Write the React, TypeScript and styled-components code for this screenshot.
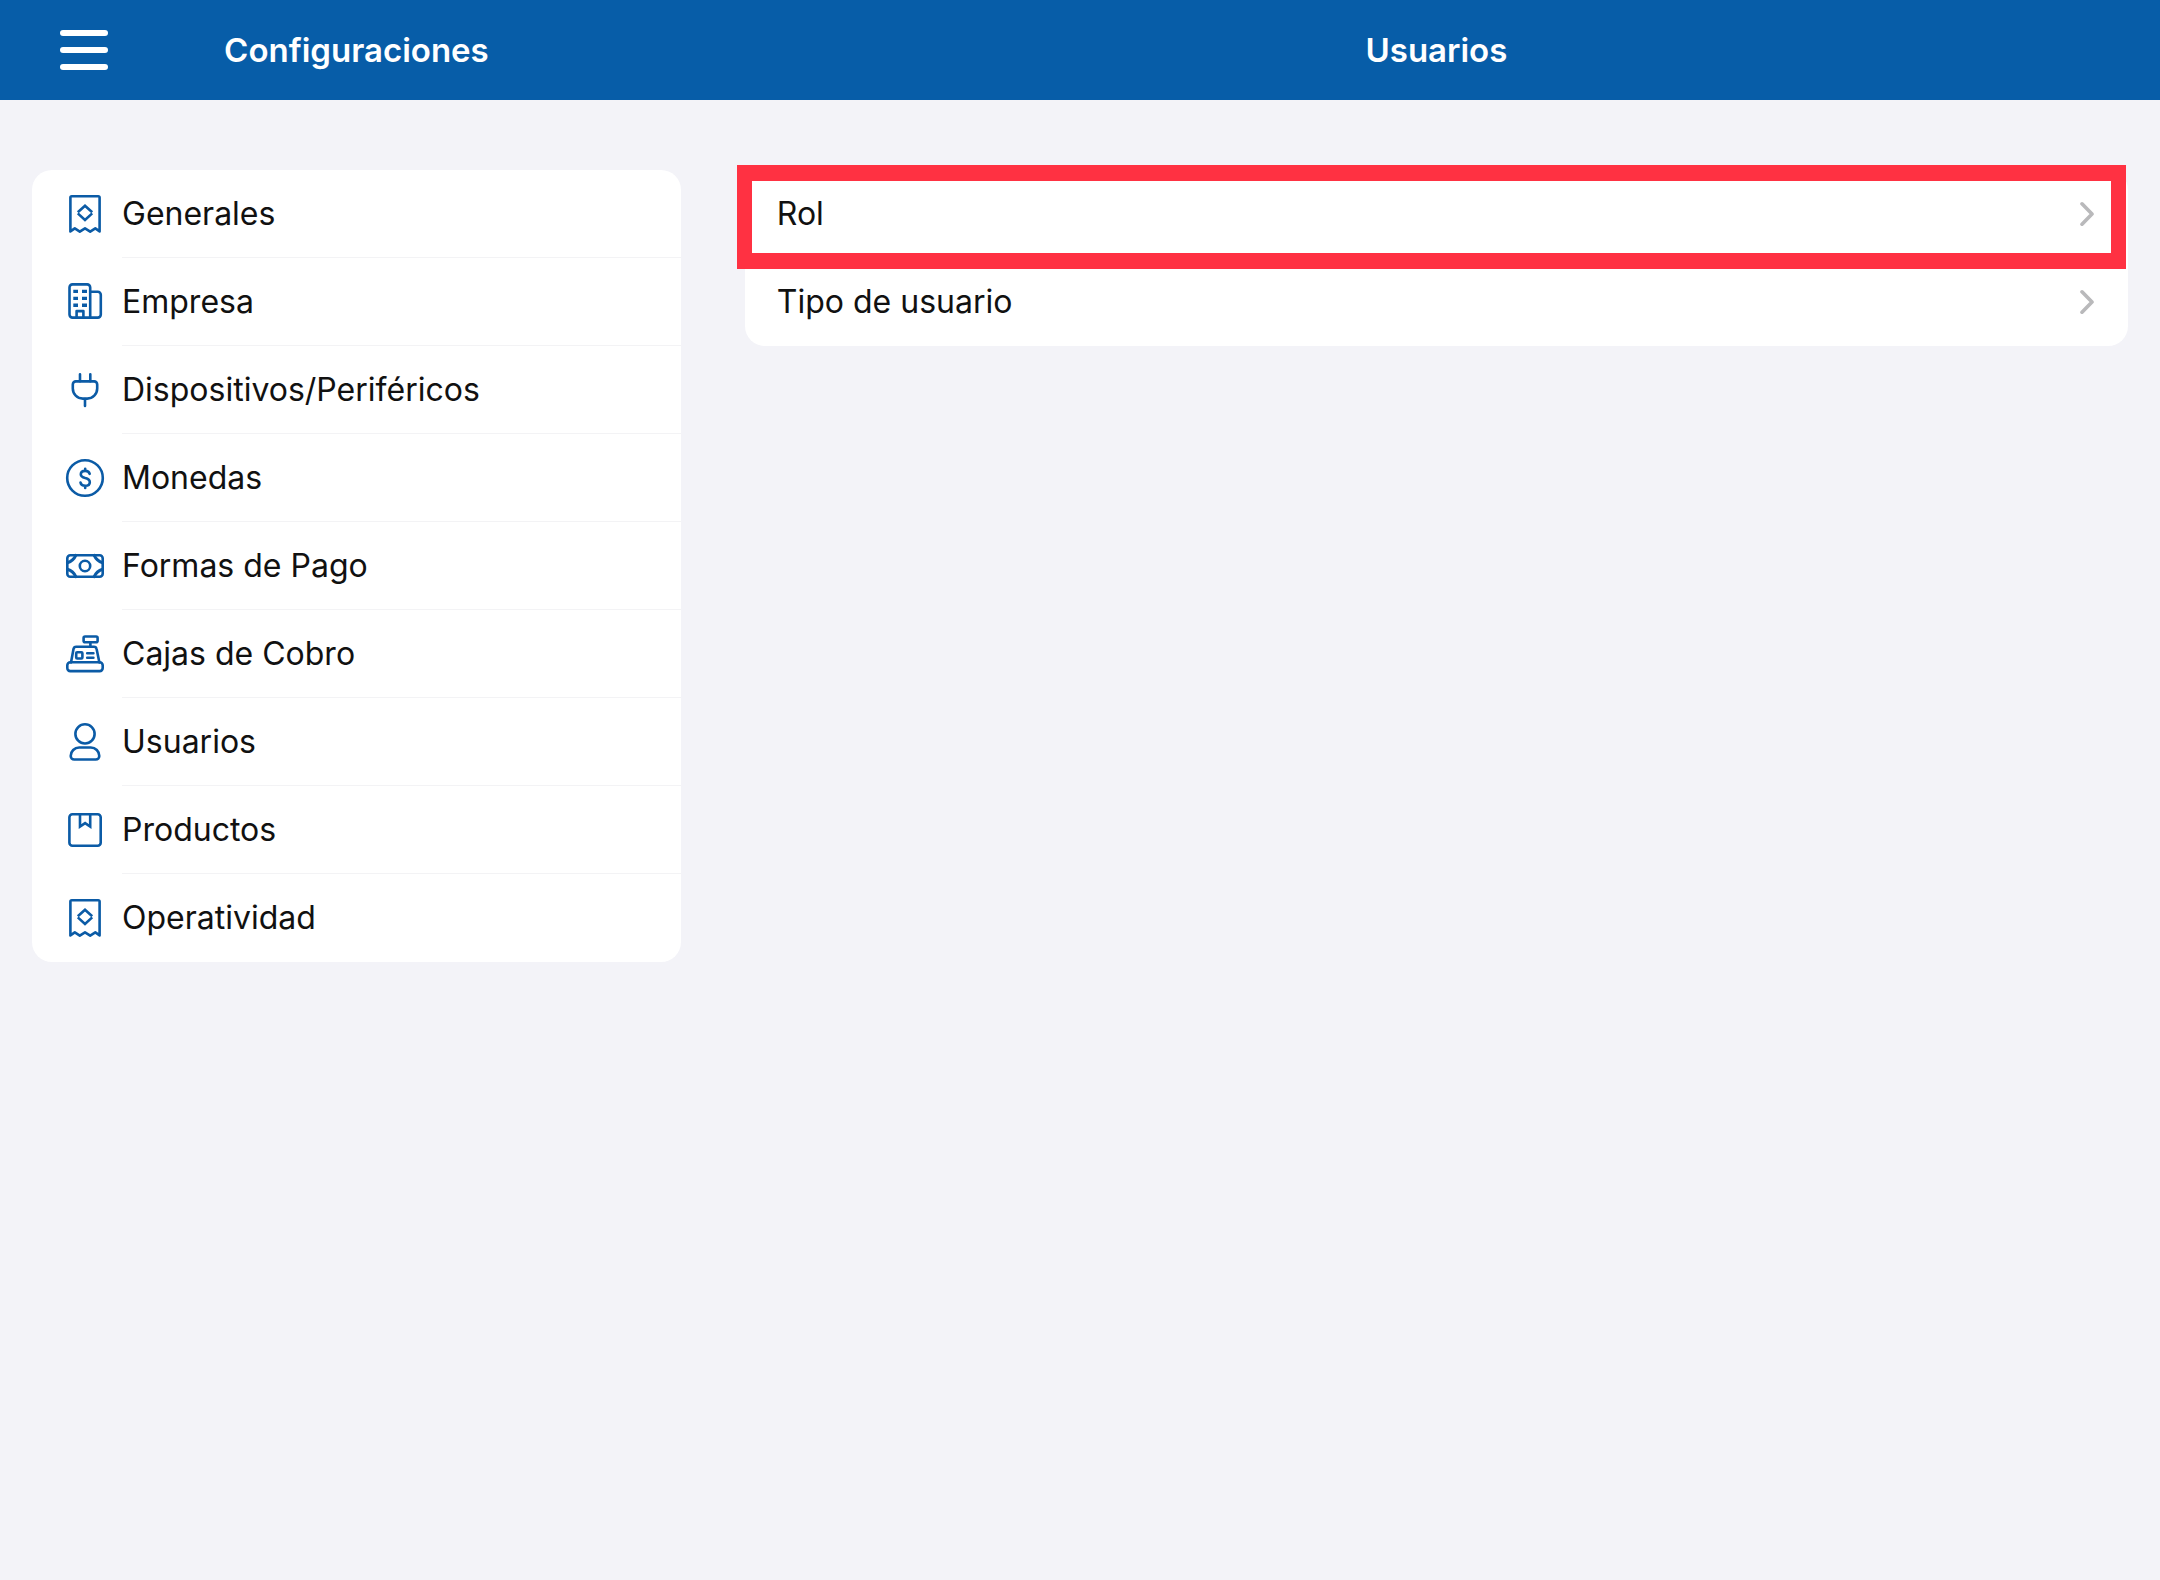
import React from "react";
import styled, { createGlobalStyle } from "styled-components";

const GlobalStyle = createGlobalStyle`
  *, *::before, *::after { box-sizing: border-box; }
  body {
    margin: 0;
    background: #f3f3f8;
    color: #111111;
    font-family: Inter, "Liberation Sans", sans-serif;
    font-size: 32px;
    line-height: 40px;
  }
`;

const Columns = styled.div`
  display: grid;
  grid-template-columns: 33fr 67fr;
`;

const Header = styled(Columns).attrs({ as: "header" })`
  height: 100px;
  background: #075da8;
`;

const HeaderCell = styled.div`
  position: relative;
  display: flex;
  align-items: center;
  justify-content: center;
`;

const Title = styled.h1`
  margin: 0;
  color: #ffffff;
  font-size: 33px;
  font-weight: 600;
  line-height: 40px;
`;

const MenuButton = styled.button`
  position: absolute;
  left: 60px;
  top: 26px;
  display: flex;
  flex-direction: column;
  justify-content: space-between;
  width: 48px;
  height: 48px;
  padding: 4px 0;
  border: 0;
  background: none;
  cursor: pointer;
`;

const MenuBar = styled.span`
  height: 6px;
  border-radius: 3px;
  background: #ffffff;
`;

const Panel = styled.div`
  padding: 70px 32px 32px;
`;

const List = styled.ul`
  margin: 0;
  padding: 0;
  list-style: none;
  border-radius: 20px;
  background: #ffffff;
`;

const Item = styled.li`
  position: relative;
`;

const RowLink = styled.a`
  display: flex;
  align-items: stretch;
  height: 88px;
  padding-left: 32px;
  color: inherit;
  text-decoration: none;
`;

const IconSlot = styled.span`
  display: flex;
  align-items: center;
  width: 58px;
`;

const RowBody = styled.span<{ $divided?: boolean }>`
  display: flex;
  flex: 1;
  align-items: center;
  justify-content: space-between;
  padding-right: 32px;
  border-bottom: 1px solid ${(p) => (p.$divided ? "#f3f3f5" : "transparent")};
`;

const Highlight = styled.span`
  position: absolute;
  inset: -5px 2px -11px -8px;
  border: solid #ff3142;
  border-width: 16px 15px;
  pointer-events: none;
`;

const IconSvg = styled.svg`
  width: 42px;
  height: 42px;
  fill: none;
  stroke: #0b5ba6;
  stroke-width: 2.6;
  stroke-linecap: round;
  stroke-linejoin: round;
`;

const Glyph = ({ children }: { children: React.ReactNode }) => (
  <IconSvg viewBox="-1 -1 42 42" aria-hidden="true">
    {children}
  </IconSvg>
);

const Chevron = styled.svg`
  width: 16px;
  height: 26px;
  fill: none;
  stroke: #b9b9bb;
  stroke-width: 3.6;
  stroke-linecap: round;
  stroke-linejoin: round;
`;

const ReceiptIcon = () => (
  <Glyph>
    <path d="M5.400 37.400V3.600a1.400 1.400 0 0 1 1.400-1.400h26.400a1.400 1.400 0 0 1 1.400 1.400v33.800l-4.300-3-5.100 3.200-5.200-3.200-5.200 3.200-5-3.200z" />
    <path d="M12.800 18.200 20 11.700l7.200 6.500M12.800 19.400 20 25.900l7.200-6.500" strokeLinecap="butt" strokeLinejoin="miter" />
  </Glyph>
);

const BuildingIcon = () => (
  <Glyph>
    <path d="M7.500 2.400h14.700a3 3 0 0 1 3 3v30.200H7.500a3 3 0 0 1-3-3V5.400a3 3 0 0 1 3-3z" />
    <path d="M25.200 9.700h7.600a3 3 0 0 1 3 3v19.900a3 3 0 0 1-3 3h-7.600M11.600 35.600v-6.500h6.800v6.500" />
    <path d="M8.300 9.400h4.700M17 9.400h5M8.300 16.400h4.700M17 16.400h5M8.300 23.300h4.700M17 23.300h5" strokeWidth="3.4" strokeLinecap="butt" />
  </Glyph>
);

const PlugIcon = () => (
  <Glyph>
    <path d="M15 4.200v7M25.300 4.200v7M20 29v7" />
    <path d="M10.800 11.400h18.400a3 3 0 0 1 3 3v4.200a10 10 0 0 1-10 10h-4.400a10 10 0 0 1-10-10v-4.200a3 3 0 0 1 3-3z" />
  </Glyph>
);

const CoinIcon = () => (
  <Glyph>
    <circle cx="20" cy="20" r="17.800" />
    <path d="M24.700 15.800c-.5-1.800-2.200-2.900-4.500-2.900-2.600 0-4.400 1.400-4.400 3.400 0 2 1.400 3 4.400 3.800 3.300.8 4.600 2 4.600 4.100 0 2.200-1.900 3.600-4.600 3.600-2.500 0-4.300-1.200-4.700-3.300M20.200 10.700v2.200M20.200 27.800v2.200" />
  </Glyph>
);

const BanknoteIcon = () => (
  <Glyph>
    <rect x="2.300" y="9.300" width="35.400" height="21.400" rx="3" />
    <circle cx="20" cy="20" r="5.200" />
    <path d="M10.800 9.400c-1.600 3.600-4.500 6.200-8.400 7.400M29.200 9.400c1.600 3.600 4.500 6.200 8.400 7.400M10.800 30.600c-1.600-3.600-4.500-6.200-8.400-7.400M29.200 30.600c1.600-3.600 4.500-6.200 8.400-7.400" strokeWidth="3" />
  </Glyph>
);

const RegisterIcon = () => (
  <Glyph>
    <rect x="18.600" y="2.500" width="14" height="5.800" rx="1.500" />
    <path d="M25.400 8.200v4.600M6 28.400l2.500-13.300a2.800 2.800 0 0 1 2.800-2.300h17.500a2.800 2.800 0 0 1 2.800 2.300L34.400 28.400" />
    <rect x="2.300" y="28.300" width="35.400" height="8.800" rx="3" />
    <rect x="11.200" y="18.300" width="6.200" height="6.200" rx="1" />
    <path d="M22.200 19.200h6.200M22.200 23.800h6.200" />
  </Glyph>
);

const UserIcon = () => (
  <Glyph>
    <circle cx="20" cy="11.900" r="9.600" />
    <path d="M14.200 25.500h11.600a8.500 8.500 0 0 1 8.500 8.500 3.500 3.500 0 0 1-3.500 3.500H9.200A3.500 3.500 0 0 1 5.700 34a8.500 8.500 0 0 1 8.500-8.500z" />
  </Glyph>
);

const PackageIcon = () => (
  <Glyph>
    <rect x="4.400" y="4.200" width="31.300" height="31.500" rx="3" />
    <path d="M15 4.200v12.400l5.100-3.500 5.100 3.500V4.200" strokeLinejoin="miter" />
  </Glyph>
);

const sections = [
  { label: "Generales", Icon: ReceiptIcon },
  { label: "Empresa", Icon: BuildingIcon },
  { label: "Dispositivos/Periféricos", Icon: PlugIcon },
  { label: "Monedas", Icon: CoinIcon },
  { label: "Formas de Pago", Icon: BanknoteIcon },
  { label: "Cajas de Cobro", Icon: RegisterIcon },
  { label: "Usuarios", Icon: UserIcon },
  { label: "Productos", Icon: PackageIcon },
  { label: "Operatividad", Icon: ReceiptIcon },
];

const options = [
  { label: "Rol", highlighted: true },
  { label: "Tipo de usuario", highlighted: false },
];

export default function App() {
  return (
    <>
      <GlobalStyle />
      <Header>
        <HeaderCell>
          <MenuButton type="button" aria-label="Menú">
            <MenuBar />
            <MenuBar />
            <MenuBar />
          </MenuButton>
          <Title>Configuraciones</Title>
        </HeaderCell>
        <HeaderCell>
          <Title as="h2">Usuarios</Title>
        </HeaderCell>
      </Header>
      <Columns>
        <Panel as="nav">
          <List>
            {sections.map(({ label, Icon }, i) => (
              <Item key={label}>
                <RowLink href="#">
                  <IconSlot>
                    <Icon />
                  </IconSlot>
                  <RowBody $divided={i < sections.length - 1}>{label}</RowBody>
                </RowLink>
              </Item>
            ))}
          </List>
        </Panel>
        <Panel as="main">
          <List>
            {options.map(({ label, highlighted }) => (
              <Item key={label}>
                <RowLink href="#">
                  <RowBody>
                    {label}
                    <Chevron viewBox="0 0 16 26" aria-hidden="true">
                      <path d="M2 2.800 12 13 2 23.200" />
                    </Chevron>
                  </RowBody>
                </RowLink>
                {highlighted && <Highlight />}
              </Item>
            ))}
          </List>
        </Panel>
      </Columns>
    </>
  );
}
